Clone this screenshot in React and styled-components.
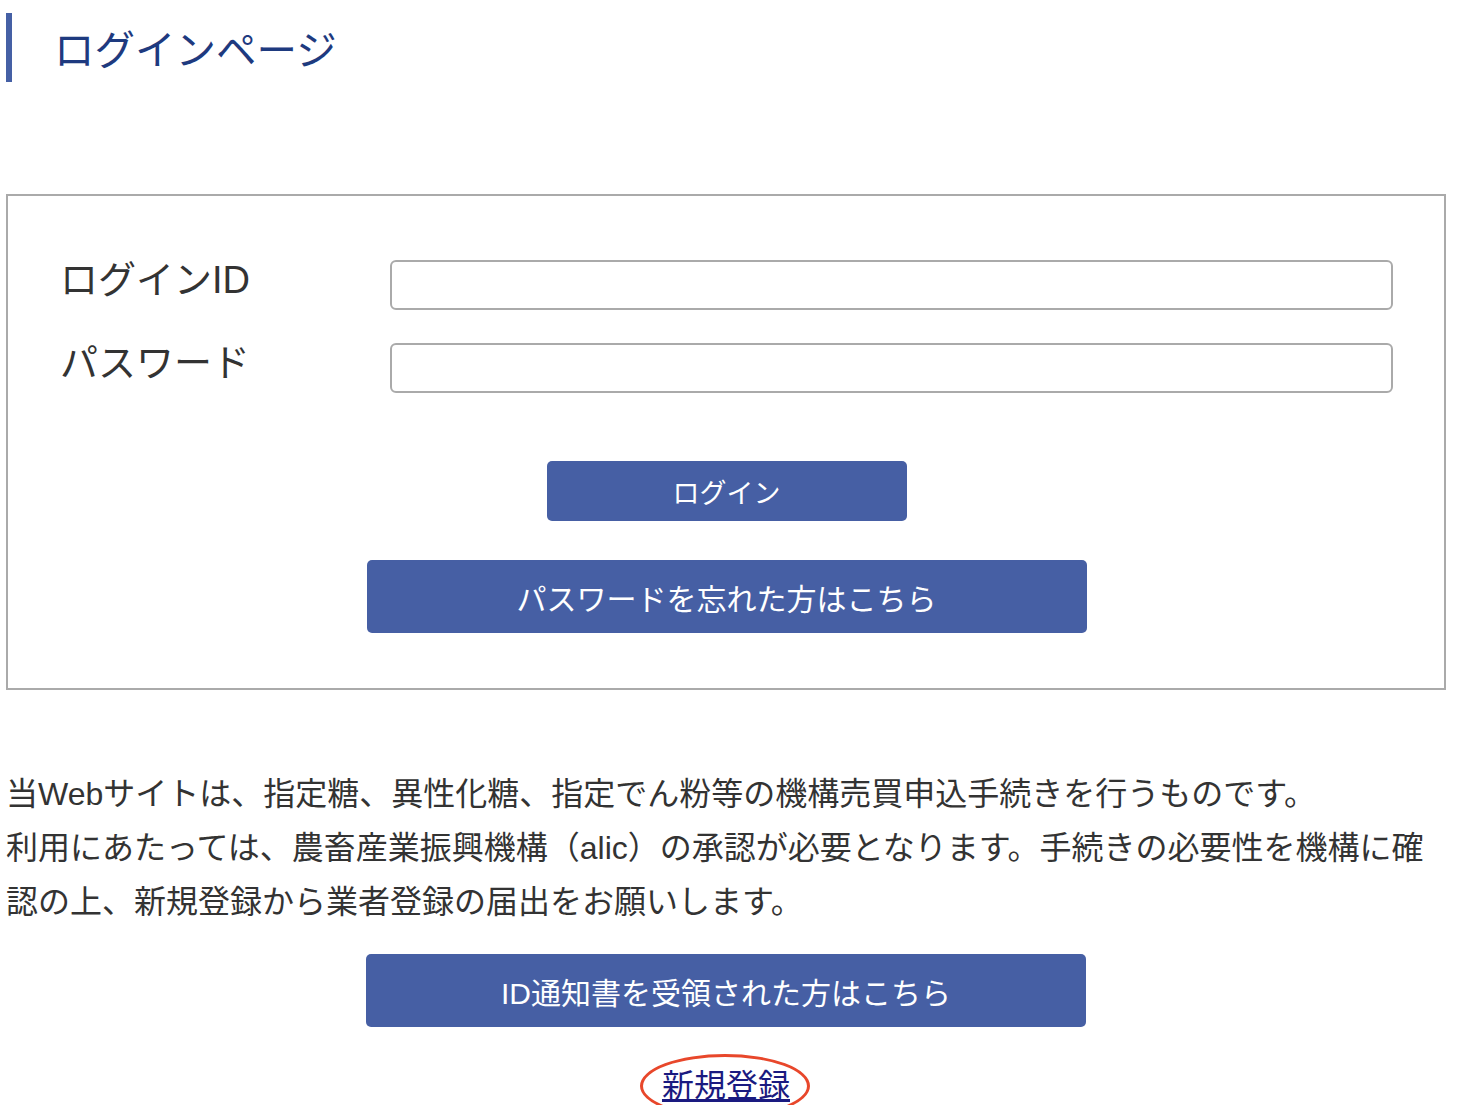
import React from "react";
import styled, { createGlobalStyle } from "styled-components";

const GlobalStyle = createGlobalStyle`
  body {
    margin: 0;
    background: #fff;
    font-family: "Liberation Sans", "Noto Sans CJK JP", sans-serif;
    color: #333;
  }
`;

const Page = styled.div`
  padding: 13px 16px 0 6px;
`;

const Heading = styled.h1`
  margin: 0;
  height: 69px;
  display: flex;
  align-items: center;
  border-left: 6px solid #4560a5;
  padding-left: 42px;
  font-size: 40.5px;
  font-weight: normal;
  color: #1e3a7f;
`;

const LoginBox = styled.div`
  margin-top: 112px;
  border: 2px solid #aaa;
  padding: 64px 51px 55px 52px;
`;

const FieldGrid = styled.div`
  display: grid;
  grid-template-columns: 330px 1fr;
  row-gap: 33px;
  align-items: start;
`;

const Label = styled.label`
  font-size: 38px;
  line-height: 40px;
  color: #333;
`;

const Input = styled.input`
  box-sizing: border-box;
  width: 100%;
  height: 50px;
  border: 2px solid #aaa;
  border-radius: 6px;
  padding: 0 10px;
  font-size: 24px;
  outline: none;
`;

const ButtonStack = styled.div`
  display: flex;
  flex-direction: column;
  align-items: center;
  gap: 39px;
  margin-top: 68px;
`;

const Button = styled.button`
  width: ${(p) => p.$w}px;
  height: ${(p) => p.$h}px;
  border: none;
  border-radius: 5px;
  background: #465fa4;
  color: #fff;
  font-family: inherit;
  font-size: ${(p) => p.$fs}px;
  cursor: pointer;
`;

const Notice = styled.p`
  margin: 77px 0 0;
  font-size: 32px;
  line-height: 54px;
  color: #333;
`;

const Actions = styled.div`
  display: flex;
  flex-direction: column;
  align-items: center;
  margin-top: 25px;
`;

const LinkWrap = styled.div`
  position: relative;
  margin-top: 40px;
  font-size: 32px;
  line-height: 38px;
  &::after {
    content: "";
    position: absolute;
    left: -22px;
    right: -20px;
    top: -13px;
    bottom: -13px;
    border: 3px solid #e8472b;
    border-radius: 50%;
    pointer-events: none;
  }
`;

const RegisterLink = styled.a`
  color: #1a1a80;
  text-decoration: underline;
`;

export default function App() {
  return (
    <>
      <GlobalStyle />
      <Page>
        <Heading>ログインページ</Heading>
        <LoginBox>
          <FieldGrid>
            <Label htmlFor="loginId">ログインID</Label>
            <Input id="loginId" type="text" />
            <Label htmlFor="password">パスワード</Label>
            <Input id="password" type="password" />
          </FieldGrid>
          <ButtonStack>
            <Button $w={360} $h={60} $fs={27}>ログイン</Button>
            <Button $w={720} $h={73} $fs={30}>パスワードを忘れた方はこちら</Button>
          </ButtonStack>
        </LoginBox>
        <Notice>
          当Webサイトは、指定糖、異性化糖、指定でん粉等の機構売買申込手続きを行うものです。
          <br />
          利用にあたっては、農畜産業振興機構（alic）の承認が必要となります。手続きの必要性を機構に確認の上、新規登録から業者登録の届出をお願いします。
        </Notice>
        <Actions>
          <Button $w={720} $h={73} $fs={30}>ID通知書を受領された方はこちら</Button>
          <LinkWrap>
            <RegisterLink href="#">新規登録</RegisterLink>
          </LinkWrap>
        </Actions>
      </Page>
    </>
  );
}
